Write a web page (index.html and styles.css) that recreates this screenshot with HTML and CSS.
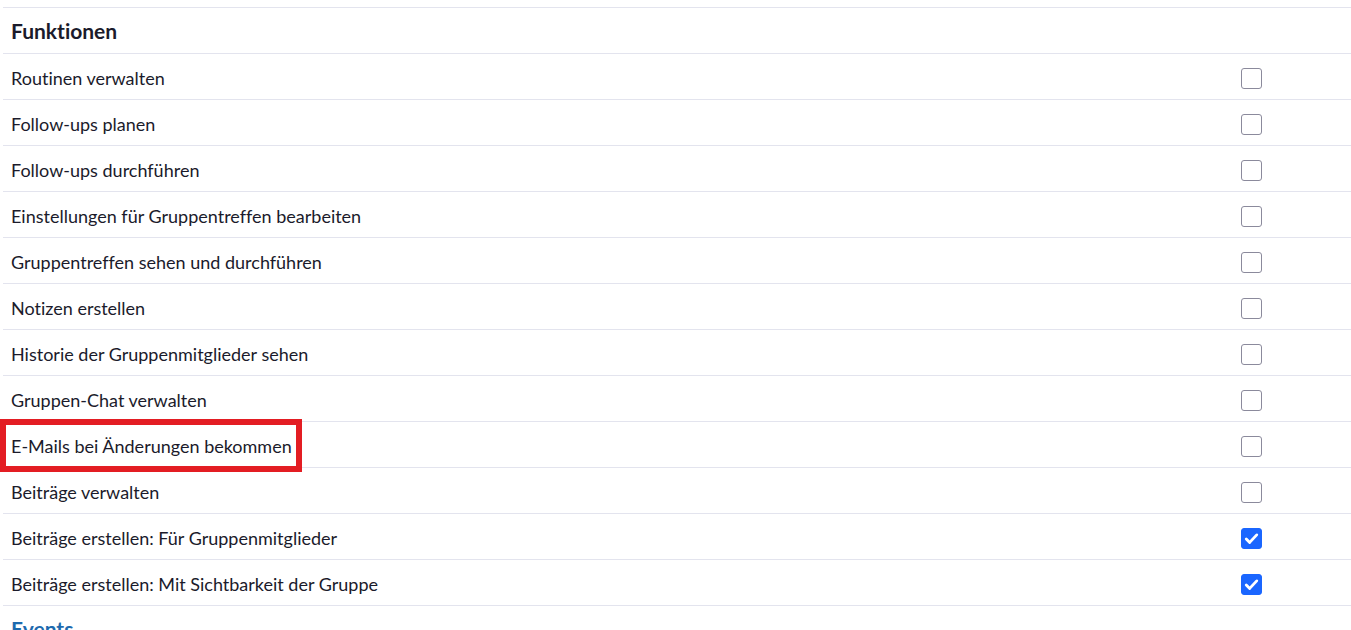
FILE: index.html
```html
<!DOCTYPE html>
<html lang="de">
<head>
    <meta charset="UTF-8">
    <meta name="viewport" content="width=device-width, initial-scale=1.0">
    <title>Gruppenrechte</title>
    <link rel="stylesheet" href="styles.css">
</head>
<body>
    <div class="permissions">
        <div class="section-title">Funktionen</div>
        <div class="row"><span class="label">Routinen verwalten</span><span class="check"><input type="checkbox"></span></div>
        <div class="row"><span class="label">Follow-ups planen</span><span class="check"><input type="checkbox"></span></div>
        <div class="row"><span class="label">Follow-ups durchführen</span><span class="check"><input type="checkbox"></span></div>
        <div class="row"><span class="label">Einstellungen für Gruppentreffen bearbeiten</span><span class="check"><input type="checkbox"></span></div>
        <div class="row"><span class="label">Gruppentreffen sehen und durchführen</span><span class="check"><input type="checkbox"></span></div>
        <div class="row"><span class="label">Notizen erstellen</span><span class="check"><input type="checkbox"></span></div>
        <div class="row"><span class="label">Historie der Gruppenmitglieder sehen</span><span class="check"><input type="checkbox"></span></div>
        <div class="row"><span class="label">Gruppen-Chat verwalten</span><span class="check"><input type="checkbox"></span></div>
        <div class="row highlighted"><span class="label">E-Mails bei Änderungen bekommen</span><span class="check"><input type="checkbox"></span></div>
        <div class="row"><span class="label">Beiträge verwalten</span><span class="check"><input type="checkbox"></span></div>
        <div class="row"><span class="label">Beiträge erstellen: Für Gruppenmitglieder</span><span class="check"><input type="checkbox" checked></span></div>
        <div class="row"><span class="label">Beiträge erstellen: Mit Sichtbarkeit der Gruppe</span><span class="check"><input type="checkbox" checked></span></div>
        <div class="section-title next">Events</div>
    </div>
</body>
</html>
```

FILE: styles.css
```css
body {
    margin: 0;
    font-family: Lato, "Open Sans", sans-serif;
    font-variant-ligatures: none;
    color: #1b1b2b;
    background-color: white;
    overflow: hidden;
}
.permissions {
    margin: 7px 0 0 3px;
    border-top: 1px solid #e3e4ee;
}
.section-title {
    display: flex;
    align-items: center;
    height: 45px;
    padding-left: 8px;
    font-size: 21px;
    font-weight: bold;
    border-bottom: 1px solid #e3e4ee;
}
.section-title.next {
    color: #1d6aae;
    border-bottom: none;
}
.row {
    display: grid;
    grid-template-columns: 1fr 200px;
    align-items: center;
    height: 45px;
    padding-left: 8px;
    font-size: 18px;
    border-bottom: 1px solid #e3e4ee;
    position: relative;
}
.label {
    padding-top: 2px;
}
.check {
    display: flex;
    justify-content: center;
    padding-top: 4px;
}
.check input {
    appearance: none;
    width: 21px;
    height: 21px;
    margin: 0;
    border: 1.5px solid #8b8a9c;
    border-radius: 3px;
    background-color: white;
}
.check input:checked {
    border-color: #1a66ff;
    background-color: #1a66ff;
    background-image: url("data:image/svg+xml;utf8,<svg xmlns='http://www.w3.org/2000/svg' viewBox='0 0 20 20'><path d='M4.5 10.5l3.6 3.6L15.5 6.2' fill='none' stroke='white' stroke-width='3' stroke-linecap='round' stroke-linejoin='round'/></svg>");
    background-size: 100% 100%;
}
.highlighted::after {
    content: "";
    position: absolute;
    left: -3px;
    top: -3px;
    width: 290px;
    height: 41px;
    border: 6px solid #e31d23;
}
```
